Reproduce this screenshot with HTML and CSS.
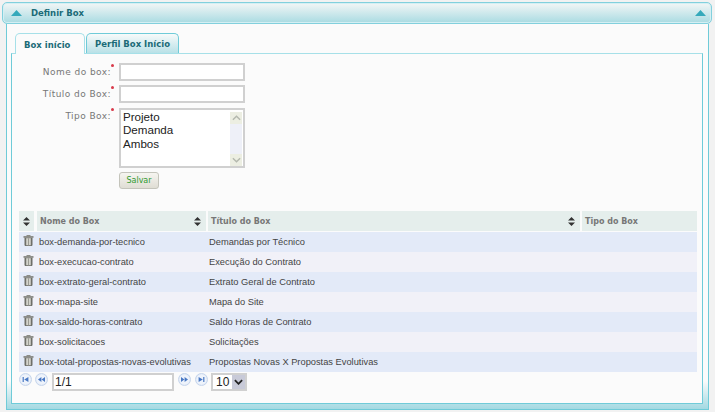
FILE: index.html
```html
<!DOCTYPE html>
<html lang="pt">
<head>
<meta charset="utf-8">
<title>Definir Box</title>
<link rel="stylesheet" href="styles.css">
</head>
<body>
<svg class="defs" width="0" height="0" aria-hidden="true">
  <symbol id="sort" viewBox="0 0 7 9"><path d="M3.5 0 7 3.6H0zM3.5 9 0 5.4h7z" fill="#333"/></symbol>
  <symbol id="trash" viewBox="0 0 11 11">
    <path d="M.5 1.2h10v1.5H.5z" fill="#77776f"/><path d="M3.5 0h4v1.4h-4z" fill="#8d8d86"/>
    <path d="M1.5 2.7h8v7.6l-.7.7H2.2l-.7-.7z" fill="#6f6f68"/><path d="M3.2 3.2h4.6v7H3.2z" fill="#d4d4cc"/><path d="M5 3.2h1v7H5z" fill="#9a9a92"/>
  </symbol>
  <symbol id="up" viewBox="0 0 11 6"><path d="M5.5 0 11 6H0z" fill="#35a9bb"/></symbol>
</svg>
<main class="panel">
  <header class="panel-head">
    <svg class="arrow"><use href="#up"/></svg>
    <h1 class="panel-title">Definir Box</h1>
    <svg class="arrow"><use href="#up"/></svg>
  </header>
  <div class="panel-body">
    <nav class="tabs">
      <a class="tab tab-active">Box início</a>
      <a class="tab">Perfil Box Início</a>
    </nav>
    <section class="tab-content">
      <form class="form">
        <div class="field"><label class="label">Nome do box:<i class="req"></i></label><input class="input" type="text"></div>
        <div class="field"><label class="label">Título do Box:<i class="req"></i></label><input class="input" type="text"></div>
        <div class="field field-list"><label class="label">Tipo Box:<i class="req"></i></label>
          <div class="listbox">
            <ul class="options"><li>Projeto</li><li>Demanda</li><li>Ambos</li></ul>
            <div class="scroll">
              <span class="scroll-btn"><svg viewBox="0 0 10 6"><path d="M1 5 5 1l4 4" fill="none" stroke="#b4b8ae" stroke-width="1.6"/></svg></span>
              <span class="scroll-track"></span>
              <span class="scroll-btn"><svg viewBox="0 0 10 6"><path d="M1 1l4 4 4-4" fill="none" stroke="#b4b8ae" stroke-width="1.6"/></svg></span>
            </div>
          </div>
        </div>
        <div class="actions"><button class="save" type="button">Salvar</button></div>
      </form>
      <table class="grid">
        <colgroup><col class="c1"><col class="c2"><col class="c3"><col class="c4"></colgroup>
        <thead>
          <tr>
            <th><svg class="sort"><use href="#sort"/></svg></th>
            <th><span class="th-in">Nome do Box<svg class="sort"><use href="#sort"/></svg></span></th>
            <th><span class="th-in">Título do Box<svg class="sort"><use href="#sort"/></svg></span></th>
            <th><span class="th-in">Tipo do Box</span></th>
          </tr>
        </thead>
        <tbody>
          <tr><td><svg class="trash"><use href="#trash"/></svg></td><td>box-demanda-por-tecnico</td><td>Demandas por Técnico</td><td></td></tr>
          <tr><td><svg class="trash"><use href="#trash"/></svg></td><td>box-execucao-contrato</td><td>Execução do Contrato</td><td></td></tr>
          <tr><td><svg class="trash"><use href="#trash"/></svg></td><td>box-extrato-geral-contrato</td><td>Extrato Geral de Contrato</td><td></td></tr>
          <tr><td><svg class="trash"><use href="#trash"/></svg></td><td>box-mapa-site</td><td>Mapa do Site</td><td></td></tr>
          <tr><td><svg class="trash"><use href="#trash"/></svg></td><td>box-saldo-horas-contrato</td><td>Saldo Horas de Contrato</td><td></td></tr>
          <tr><td><svg class="trash"><use href="#trash"/></svg></td><td>box-solicitacoes</td><td>Solicitações</td><td></td></tr>
          <tr><td><svg class="trash"><use href="#trash"/></svg></td><td>box-total-propostas-novas-evolutivas</td><td>Propostas Novas X Propostas Evolutivas</td><td></td></tr>
        </tbody>
      </table>
      <div class="pager">
        <span class="pg pg-tight"><svg viewBox="0 0 11 11"><path d="M2.6 3h1.2v5H2.6zM8.4 3v5L4.2 5.5z" fill="#4a79c4"/></svg></span>
        <span class="pg"><svg viewBox="0 0 11 11"><path d="M5.4 3v5L2 5.5zM9 3v5L5.6 5.5z" fill="#4a79c4"/></svg></span>
        <input class="page-input" type="text" value="1/1">
        <span class="pg"><svg viewBox="0 0 11 11"><path d="M2 3v5l3.4-2.5zM5.6 3v5L9 5.5z" fill="#4a79c4"/></svg></span>
        <span class="pg pg-tight"><svg viewBox="0 0 11 11"><path d="M2.6 3v5l4.2-2.5zM7.2 3h1.2v5H7.2z" fill="#4a79c4"/></svg></span>
        <span class="page-size"><span class="size-val">10</span><span class="size-btn"><svg viewBox="0 0 10 6"><path d="M1 1l4 4 4-4" fill="none" stroke="#222" stroke-width="2"/></svg></span></span>
      </div>
    </section>
  </div>
</main>
</body>
</html>
```
FILE: styles.css
```css
* { box-sizing: border-box; }
html, body { margin: 0; padding: 0; }
body {
  width: 715px;
  height: 412px;
  overflow: hidden;
  background: #f2f2f2;
  padding: 2px 3px 0 2px;
  font-family: "DejaVu Sans", Verdana, sans-serif;
}
.defs { position: absolute; }
.panel { width: 710px; }
.panel-head {
  height: 22px;
  border: 1px solid #82d0dd;
  border-radius: 5px;
  box-shadow: inset 0 0 0 1px #d5eff3;
  background: linear-gradient(#f3f6f6, #a9dbe2);
  display: flex;
  align-items: center;
  padding: 0 5px 0 8px;
  position: relative;
  z-index: 1;
}
.arrow { width: 11px; height: 6px; display: block; }
.panel-title {
  flex: 1;
  margin: 0 0 0 9px;
  font-size: 8.5px;
  font-weight: bold;
  color: #1b6b78;
}
.panel-body {
  margin: 0 3px 0 4px;
  height: 386px;
  border-left: 1px solid #6fcbd8;
  border-right: 1px solid #6fcbd8;
  border-bottom: 1px solid #6fcbd8;
  background: linear-gradient(#fbfbfb calc(100% - 28px), #a3d9e2);
  padding: 9px 5px 0 4px;
  display: flex;
  flex-direction: column;
}
.tabs { display: flex; height: 20px; padding-left: 4px; gap: 1px; position: relative; z-index: 1; }
.tab {
  width: 93px;
  height: 20px;
  padding: 0 8px;
  border: 1px solid #6fcbd8;
  border-bottom: 0;
  border-radius: 5px 5px 0 0;
  background: linear-gradient(#f7fafa, #b9e1e7);
  font-size: 8.5px;
  font-weight: bold;
  line-height: 20px;
  white-space: nowrap;
  color: #1b6b78;
}
.tab-active {
  width: 70px;
  height: 21px;
  line-height: 22px;
  background: #fbfbfb;
  border-color: #a6e0e8;
}
.tab-content {
  height: 351px;
  border: 1px solid #a6e0e8;
  border-left: 1px solid #6fcbd8;
  border-right: 1px solid #6fcbd8;
  border-bottom: 1px solid #6fcbd8;
  background: #fbfbfb;
  padding: 9px 6px 0 7px;
}
.form { height: 148px; }
.field { display: flex; height: 22px; align-items: flex-start; }
.field-list { height: 65px; }
.label {
  width: 100px;
  padding-right: 8px;
  text-align: right;
  font-size: 9px;
  line-height: 18px;
  letter-spacing: .45px;
  color: #777;
  position: relative;
}
.req {
  position: absolute;
  right: 5px;
  top: 1px;
  width: 3px;
  height: 3px;
  border-radius: 50%;
  background: #d83a4a;
}
.input {
  width: 126px;
  height: 18px;
  border: 2px solid #d0d0d0;
  background: #fff;
  padding: 0;
}
.listbox {
  width: 126px;
  height: 60px;
  margin-top: 1px;
  border: 2px solid #d0d0d0;
  background: #fff;
  padding: 2px 1px 0 0;
  display: flex;
}
.options {
  flex: 1;
  list-style: none;
  margin: -2px 0 0;
  padding: 0 0 0 2px;
  font-family: "Liberation Sans", Arial, sans-serif;
  font-size: 11.6px;
  line-height: 13.4px;
  color: #222;
}
.scroll { width: 12px; display: flex; flex-direction: column; background: #eef0f8; }
.scroll-btn { height: 12px; background: #eceee2; display: flex; align-items: center; justify-content: center; }
.scroll-btn svg { width: 9px; height: 6px; display: block; }
.scroll-track { flex: 1; }
.actions { padding: 0 0 0 100px; }
.save {
  display: block;
  width: 40px;
  height: 17px;
  padding: 0;
  border: 1px solid #c4c4bb;
  border-radius: 3px;
  background: linear-gradient(#f6f5f0, #dfddd4);
  font-family: "DejaVu Sans", Verdana, sans-serif;
  font-size: 8px;
  color: #2f9a2f;
}
.grid {
  border-collapse: separate;
  border-spacing: 0;
  width: 678px;
  table-layout: fixed;
  font-family: "Liberation Sans", Arial, sans-serif;
  font-size: 9.3px;
  color: #444;
}
.c1 { width: 18px; }
.c2 { width: 171px; }
.c3 { width: 374px; }
.c4 { width: 115px; }
.grid th {
  height: 21px;
  padding: 0 2px 1px 0;
  background: #fbfbfb;
  text-align: left;
  font-family: "DejaVu Sans", Verdana, sans-serif;
  font-size: 8px;
  font-weight: bold;
  color: #777;
}
.grid th:last-child { padding-right: 0; }
.grid th:first-child {
  padding-right: 3px;
  text-align: center;
  background-color: #e5eeec;
  background-clip: content-box;
}
.th-in {
  display: flex;
  justify-content: space-between;
  align-items: center;
  height: 20px;
  padding: 0 5px 0 3px;
  background: #e5eeec;
}
.sort { width: 7px; height: 9px; display: inline-block; vertical-align: middle; }
.grid td { height: 20px; padding: 0 0 0 2px; }
.grid td:nth-child(3) { padding-left: 1px; }
.grid tbody tr:nth-child(odd) td { background: #e3eaf8; }
.grid tbody tr:nth-child(even) td { background: #f1f1f8; }
.trash { width: 11px; height: 11px; display: block; margin: -3px 0 0 2px; }
.pager { display: flex; align-items: flex-start; height: 20px; padding-top: 1px; }
.pg {
  width: 13px;
  height: 13px;
  margin: 0 4px 0 0;
  border-radius: 50%;
  background: radial-gradient(circle, #eef3fb 55%, #cfdcf0);
  border: 1px solid #c6d5ec;
  display: flex;
  flex: none;
}
.pg-tight { margin-right: 3px; }
.pg svg { width: 11px; height: 11px; display: block; }
.page-input {
  width: 122px;
  height: 18px;
  margin: 0 4px 0 0;
  padding: 0 0 0 1px;
  border: 2px solid #d0d0d0;
  font-family: "Liberation Sans", Arial, sans-serif;
  font-size: 12px;
  color: #222;
  background: #fff;
}
.page-size {
  display: flex;
  width: 36px;
  height: 18px;
  border: 2px solid #d0d0d0;
  background: #fff;
}
.size-val { flex: 1; font-family: "Liberation Sans", Arial, sans-serif; font-size: 12px; line-height: 14px; padding-left: 3px; color: #222; }
.size-btn { width: 13px; background: #c8cad8; display: flex; align-items: center; justify-content: center; }
.size-btn svg { width: 9px; height: 6px; display: block; }
```
